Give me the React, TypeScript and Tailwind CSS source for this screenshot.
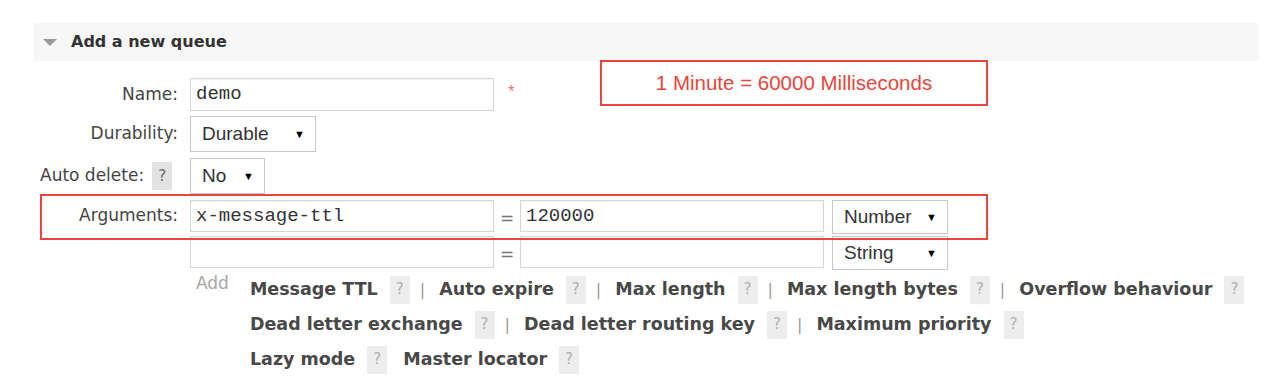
const label = "font-['DejaVu_Sans',sans-serif] text-[17px] text-[#444]";
const mono = "font-['Liberation_Mono',monospace] text-[19px] text-[#333]";
const selFont = "font-['Liberation_Sans',Arial,sans-serif] text-[19px] text-[#333]";

function Help({ dark = false }: { dark?: boolean }) {
  return (
    <span
      className={`inline-flex h-[28px] w-[20px] items-center justify-center font-['DejaVu_Sans',sans-serif] text-[15px] font-normal ${
        dark ? 'bg-[#e2e2e2] text-[#666]' : 'bg-[#ededed] text-[#b0b0b0]'
      }`}
    >
      ?
    </span>
  );
}

function Select({ value, width, height = 36 }: { value: string; width: number; height?: number }) {
  return (
    <div
      className={`flex items-center justify-between border border-[#c8c8c8] bg-white pl-[11px] pr-[10px] ${selFont}`}
      style={{ width, height }}
    >
      <span>{value}</span>
      <span className="text-[11px] text-black">▼</span>
    </div>
  );
}

function TextInput({ value = '', height = 32 }: { value?: string; height?: number }) {
  return (
    <div
      className={`flex w-[304px] items-center border border-[#d6d6d6] bg-white px-[5px] shadow-[inset_0_1px_2px_rgba(0,0,0,0.06)] ${mono}`}
      style={{ height }}
    >
      {value}
    </div>
  );
}

function Row({ children, className = '' }: { children: React.ReactNode; className?: string }) {
  return <div className={`flex gap-[12px] ${className}`}>{children}</div>;
}

function Pipe() {
  return <span className="ml-[10px] mr-[14px] text-[16px] font-normal text-[#999]">|</span>;
}

function Opt({ text, pipe = true }: { text: string; pipe?: boolean }) {
  return (
    <>
      <span className="font-bold text-[#484848]">{text}</span>
      <span className="ml-[12px]">
        <Help />
      </span>
      {pipe ? <Pipe /> : <span className="w-[16px]" />}
    </>
  );
}

function ArgPair({ k = '', v = '', type }: { k?: string; v?: string; type: string }) {
  return (
    <div className="flex items-start">
      <TextInput value={k} />
      <span className={`w-[26px] pt-[6px] text-center ${label} text-[#777]`}>=</span>
      <TextInput value={v} />
      <div className="ml-[8px]">
        <Select value={type} width={116} height={34} />
      </div>
    </div>
  );
}

export default function App() {
  return (
    <div className="relative h-[378px] w-[1288px] overflow-hidden bg-white pl-[34px] pt-[23px]">
      {/* section header */}
      <div className="flex h-[38px] w-[1225px] items-center bg-[#f7f7f7] pl-[8px]">
        <svg width="16" height="9" viewBox="0 0 16 9" className="mt-[1px]">
          <path d="M1 1h14L8 8z" fill="#9a9a9a" />
        </svg>
        <span className="ml-[13px] font-['DejaVu_Sans',sans-serif] text-[16px] font-bold text-[#333]">
          Add a new queue
        </span>
      </div>

      <div className="ml-[6px] mt-[17px] flex flex-col">
        <Row className="items-center">
          <div className={`w-[138px] text-right ${label}`}>Name:</div>
          <TextInput value="demo" height={33} />
          <span className="ml-[2px] mt-[-8px] text-[12px] text-[#e86a6a]">*</span>
        </Row>

        <Row className="mt-[5px] items-center">
          <div className={`w-[138px] text-right ${label}`}>Durability:</div>
          <Select value="Durable" width={126} />
        </Row>

        <Row className="mt-[6px] items-center">
          <div className={`flex w-[138px] items-center gap-[8px] ${label}`}>
            <span>Auto delete:</span>
            <Help dark />
          </div>
          <Select value="No" width={75} />
        </Row>

        <Row className="mt-[6px] items-start">
          <div className={`flex h-[32px] w-[138px] items-center justify-end ${label}`}>Arguments:</div>
          <ArgPair k="x-message-ttl" v="120000" type="Number" />
        </Row>

        <Row className="mt-[2px] items-start">
          <div className="w-[138px]" />
          <ArgPair type="String" />
        </Row>

        <div className={`mt-[2px] flex ${label}`}>
          <div className="w-[156px]" />
          <span className="mt-[-1px] text-[#a6a6a6]">Add</span>
          <div className="ml-[21px] flex flex-col text-[17.5px]">
            <div className="flex h-[35px] items-center">
              <Opt text="Message TTL" />
              <Opt text="Auto expire" />
              <Opt text="Max length" />
              <Opt text="Max length bytes" />
              <Opt text="Overflow behaviour" pipe={false} />
            </div>
            <div className="flex h-[35px] items-center">
              <Opt text="Dead letter exchange" />
              <Opt text="Dead letter routing key" />
              <Opt text="Maximum priority" pipe={false} />
            </div>
            <div className="flex h-[35px] items-center">
              <Opt text="Lazy mode" pipe={false} />
              <Opt text="Master locator" pipe={false} />
            </div>
          </div>
        </div>
      </div>

      {/* annotations */}
      <div className="absolute left-[600px] top-[60px] flex h-[46px] w-[388px] items-center justify-center border-2 border-[#e8453c] font-['Liberation_Sans',Arial,sans-serif] text-[20.5px] text-[#e8453c]">
        1 Minute = 60000 Milliseconds
      </div>
      <div className="pointer-events-none absolute left-[40px] top-[194px] h-[46px] w-[948px] border-2 border-[#e8453c]" />
    </div>
  );
}
